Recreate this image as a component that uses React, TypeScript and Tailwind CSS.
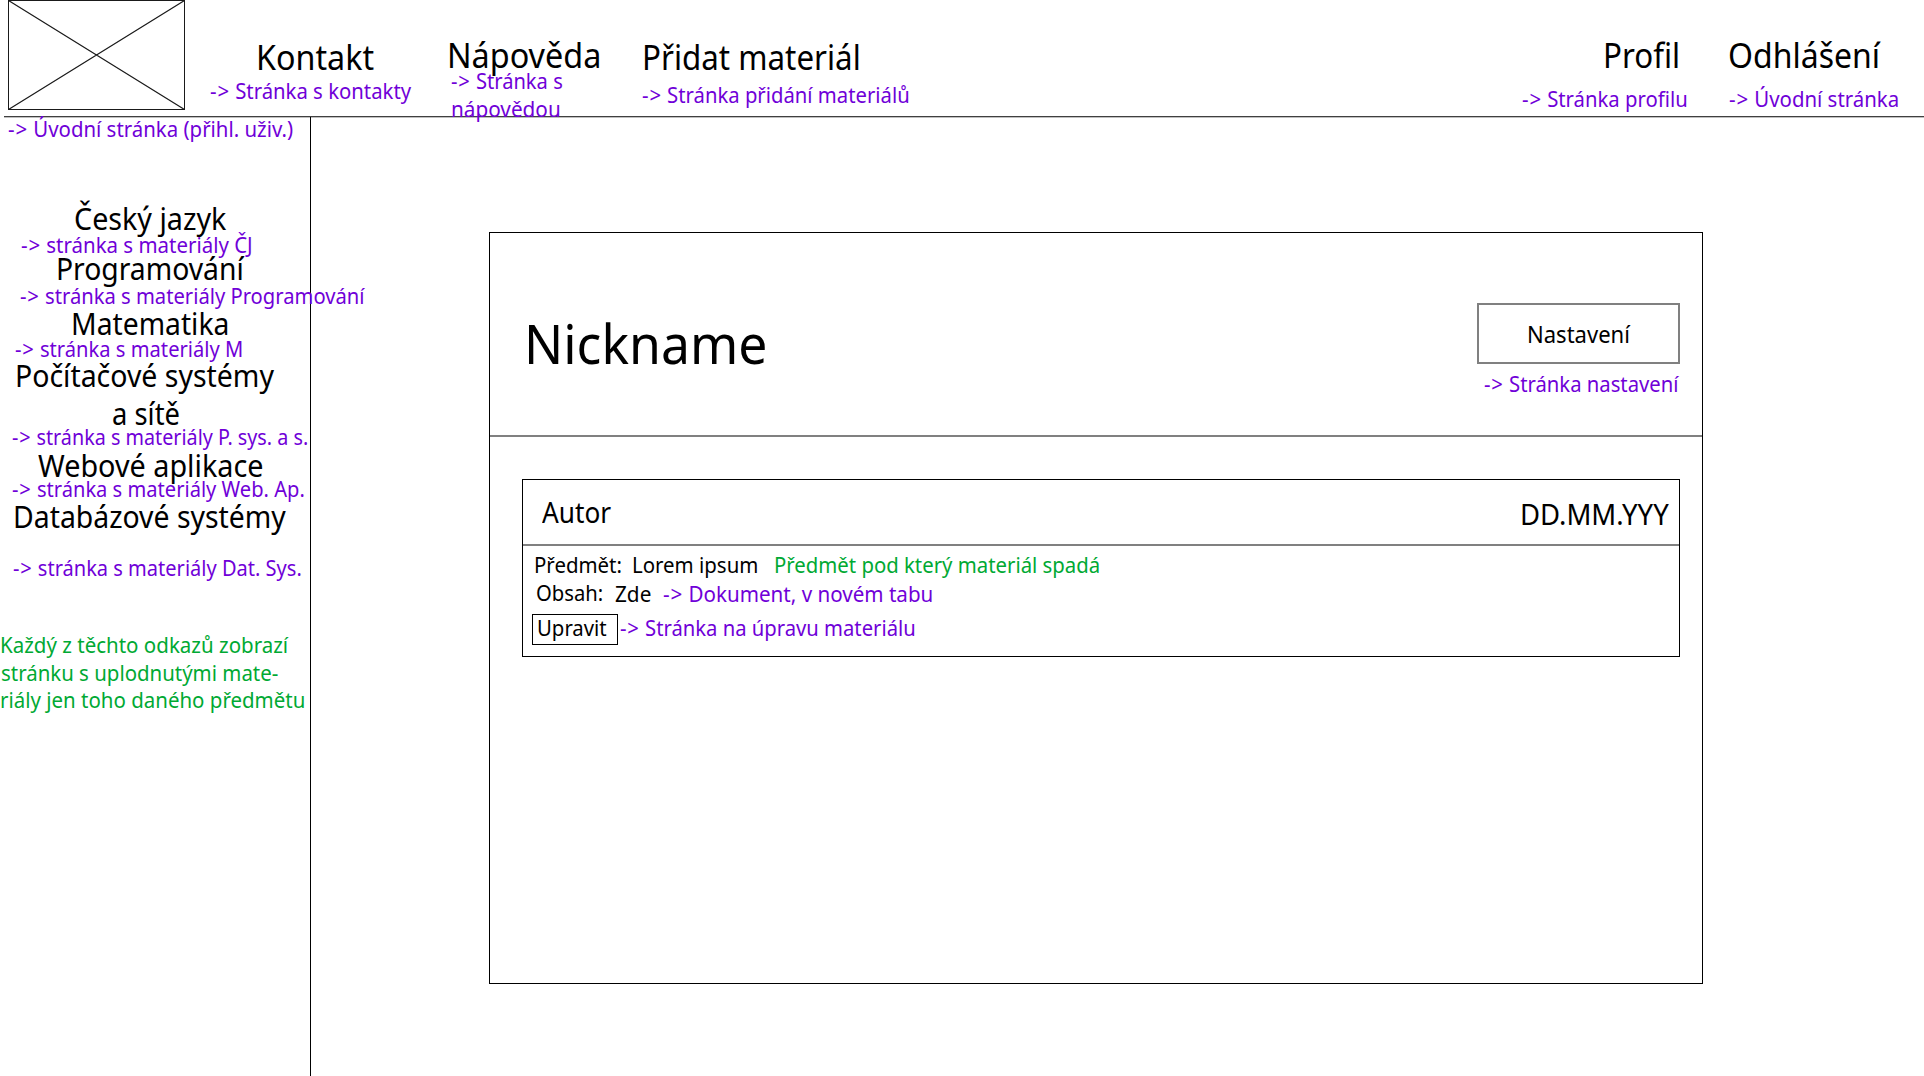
import React from 'react';

type TextProps = { children: React.ReactNode; className: string };

const Title = ({ children, className }: TextProps) => (
  <div className={`origin-left whitespace-pre text-[35px] leading-[40px] ${className}`}>{children}</div>
);

const Subject = ({ children, className }: TextProps) => (
  <div className={`origin-left whitespace-pre text-[30px] leading-[36px] ${className}`}>{children}</div>
);

const Text = ({ children, className }: TextProps) => (
  <div className={`origin-left whitespace-pre text-[21.5px] leading-[28px] ${className}`}>{children}</div>
);

const Note = ({ children, className }: TextProps) => (
  <Text className={`text-[#7000d8] ${className}`}>{children}</Text>
);

/* Annotation that names the page a link leads to. */
const Target = ({ children, className }: TextProps) => (
  <Note className={className}>
    <span className="tracking-[0.9px]">{'->'}</span> {children}
  </Note>
);

const Hint = ({ children, className }: TextProps) => (
  <Text className={`text-[#00a933] ${className}`}>{children}</Text>
);

function Logo() {
  return (
    <svg className="ml-2 h-[110px] w-[177px] shrink-0" viewBox="0 0 177 110" fill="none" stroke="#1a1a1a">
      <rect x="0.5" y="0.5" width="176" height="109" />
      <path d="M0.5 0.5 176.5 109.5M176.5 0.5 0.5 109.5" strokeWidth="1.2" />
    </svg>
  );
}

function Header() {
  return (
    <header className="relative h-[118px]">
      <div className="flex h-[116px]">
        <Logo />
        <div className="ml-6 w-[237px] shrink-0 pt-[37px]">
          <Title className="ml-[46.8px] scale-x-[0.922]">Kontakt</Title>
          <Target className="ml-[0.5px] scale-x-[0.945]">Stránka s kontakty</Target>
        </div>
        <div className="w-[194.8px] shrink-0 pt-[35px]">
          <Title className="ml-[0.8px] scale-x-[0.925]">Nápověda</Title>
          <Target className="-mt-[8px] ml-[5.2px] h-[28px] scale-x-[0.936]">Stránka s</Target>
          <Note className="ml-[4.7px] scale-x-[0.965]">nápovědou</Note>
        </div>
        <div className="w-[300px] shrink-0 pt-[37px]">
          <Title className="mb-[4px] ml-[0.8px] scale-x-[0.895]">Přidat materiál</Title>
          <Target className="ml-[1.1px] scale-x-[0.943]">Stránka přidání materiálů</Target>
        </div>
        <div className="ml-auto w-[205.6px] shrink-0 pt-[35px]">
          <Title className="mb-[10px] ml-[80.9px] scale-x-[0.895]">Profil</Title>
          <Target className="scale-x-[0.944]">Stránka profilu</Target>
        </div>
        <div className="w-[196.5px] shrink-0 pt-[35px]">
          <Title className="mb-[10px] ml-[0.7px] scale-x-[0.914]">Odhlášení</Title>
          <Target className="ml-[1.2px] scale-x-[0.949]">Úvodní stránka</Target>
        </div>
      </div>
      <div className="ml-1 h-px bg-[#404040]" />
      <div className="ml-1 h-px bg-[#bfbfbf]" />
    </header>
  );
}

function Sidebar() {
  return (
    <nav className="-mt-px w-[311px] shrink-0 border-r border-black">
      <div className="-mt-[2px]">
        <Target className="ml-[7.9px] h-[86px] scale-x-[0.949]">Úvodní stránka (přihl. uživ.)</Target>
        <Subject className="ml-[74px] h-[30px] scale-x-[0.956]">Český jazyk</Subject>
        <Target className="ml-[20.9px] h-[20px] scale-x-[0.951]">stránka s materiály ČJ</Target>
        <Subject className="ml-[55.6px] h-[31px] scale-x-[0.943]">Programování</Subject>
        <Target className="ml-[20.4px] h-[24px] scale-x-[0.939]">stránka s materiály Programování</Target>
        <Subject className="ml-[70.9px] h-[29px] scale-x-[0.942]">Matematika</Subject>
        <Target className="ml-[15.4px] h-[23px] scale-x-[0.937]">stránka s materiály M</Target>
        <Subject className="ml-[15.3px] h-[38px] scale-x-[0.948]">Počítačové systémy</Subject>
        <Subject className="ml-[111.9px] h-[27px] scale-x-[0.912]">a sítě</Subject>
        <Target className="ml-[11.9px] h-[25px] scale-x-[0.919]">stránka s materiály P. sys. a s.</Target>
        <Subject className="ml-[37.5px] h-[27px] scale-x-[0.959]">Webové aplikace</Subject>
        <Target className="ml-[11.9px] h-[24px] scale-x-[0.935]">stránka s materiály Web. Ap.</Target>
        <Subject className="ml-[12.5px] h-[55px] scale-x-[0.946]">Databázové systémy</Subject>
        <Target className="ml-[12.9px] h-[77px] scale-x-[0.932]">stránka s materiály Dat. Sys.</Target>
        <Hint className="ml-[0.2px] h-[28px] scale-x-[0.954]">Každý z těchto odkazů zobrazí</Hint>
        <Hint className="ml-[0.9px] h-[27px] scale-x-[0.95]">stránku s uplodnutými mate-</Hint>
        <Hint className="ml-[0.2px] scale-x-[0.952]">riály jen toho daného předmětu</Hint>
      </div>
    </nav>
  );
}

function Material() {
  return (
    <article className="ml-8 mt-[42px] h-[178px] w-[1158px] border border-black">
      <div className="flex h-[66px] justify-between border-b-2 border-[#808080]">
        <div className="ml-[19.2px] mt-[13.6px] origin-left scale-x-[0.92] text-[28.5px] leading-[36px]">Autor</div>
        <div className="mt-[15.6px] w-[159.3px] origin-left scale-x-[0.965] whitespace-pre text-[28.5px] leading-[36px]">
          DD.MM.YYY
        </div>
      </div>
      <div className="flex h-7 pt-[5px]">
        <Text className="ml-[11px] w-[98.1px] scale-x-[0.95]">Předmět:</Text>
        <Text className="w-[141.9px] scale-x-[0.95]">Lorem ipsum</Text>
        <Hint className="scale-x-[0.946]">Předmět pod který materiál spadá</Hint>
      </div>
      <div className="flex h-10 pt-[5px]">
        <Text className="ml-[12.8px] w-[79px] scale-x-[0.94]">Obsah:</Text>
        <Text className="mt-px w-[48.6px] scale-x-[0.965]">Zde</Text>
        <Target className="mt-px scale-x-[0.958]">Dokument, v novém tabu</Target>
      </div>
      <div className="flex">
        <button className="ml-[9px] h-[31px] w-[86px] border border-black text-left">
          <Text className="-mt-[2.5px] ml-[4.1px] scale-x-[0.946]">Upravit</Text>
        </button>
        <Target className="ml-[1.7px] scale-x-[0.941]">Stránka na úpravu materiálu</Target>
      </div>
    </article>
  );
}

function Profile() {
  return (
    <main className="ml-[178px] mt-[114px] h-[752px] w-[1214px] shrink-0 border border-black">
      <div className="flex h-[204px] justify-between border-b-2 border-[#808080]">
        <h1 className="ml-[33.9px] mt-[77.9px] origin-left scale-x-[0.948] text-[54.5px] leading-[64px]">Nickname</h1>
        <div className="mr-[22px] mt-[70px] w-[203px]">
          <button className="block h-[61px] w-full border-2 border-[#808080] text-left">
            <div className="ml-[48.2px] origin-left scale-x-[0.918] text-[24px] leading-[28px]">Nastavení</div>
          </button>
          <Target className="ml-[7.4px] mt-[6px] scale-x-[0.942]">Stránka nastavení</Target>
        </div>
      </div>
      <Material />
    </main>
  );
}

export default function App() {
  return (
    <div className="flex h-[1076px] w-[1924px] flex-col overflow-hidden bg-white font-['Noto_Sans',sans-serif] text-black">
      <Header />
      <div className="relative flex grow">
        <Sidebar />
        <Profile />
      </div>
    </div>
  );
}
